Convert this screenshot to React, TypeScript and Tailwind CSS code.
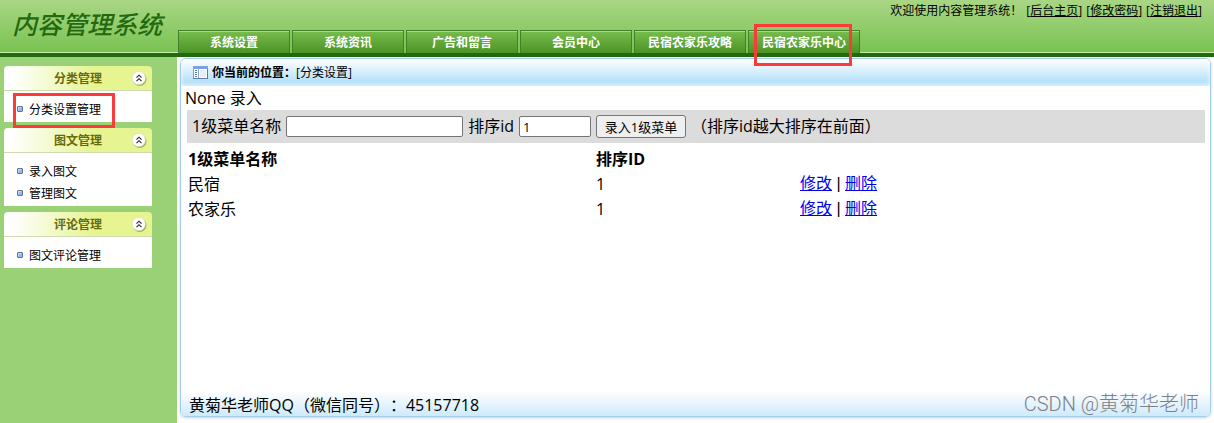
import { useState } from 'react'

const tabs = ['系统设置', '系统资讯', '广告和留言', '会员中心', '民宿农家乐攻略', '民宿农家乐中心']

const menus = [
  { title: '分类管理', items: ['分类设置管理'] },
  { title: '图文管理', items: ['录入图文', '管理图文'] },
  { title: '评论管理', items: ['图文评论管理'] },
]

const rows = [
  { name: '民宿', order: 1 },
  { name: '农家乐', order: 1 },
]

const userLinks = ['后台主页', '修改密码', '注销退出']

function CollapseIcon() {
  return (
    <svg width="18" height="18" viewBox="0 0 18 18" fill="none">
      <circle cx="9.7" cy="10.2" r="6.8" fill="#8a9440" fillOpacity="0.7" />
      <circle cx="8.8" cy="9" r="6.6" fill="#fff" stroke="#d9dcb8" strokeWidth="0.6" />
      <path d="M6.5 8.7 9 6.2l2.5 2.5M6.5 12.2 9 9.7l2.5 2.5" stroke="#222" strokeWidth="1.1" />
    </svg>
  )
}

function WindowIcon() {
  return (
    <svg width="15" height="13" viewBox="0 0 15 13" fill="none">
      <rect x="0.5" y="0.5" width="14" height="12" fill="#fff" stroke="#7d9fd0" />
      <rect x="0" y="0" width="15" height="3" fill="#7ba3df" />
      <path d="M5.5 3v9" stroke="#8aa6d0" />
      <path d="M2 4.5h2M2 6.5h2M2 8.5h2M2 10.5h2" stroke="#5b7db5" />
      <rect x="7" y="4" width="6" height="7" fill="#e9edf5" />
      <path d="M0 12.5h15M14.5 3v9" stroke="#5b79ad" />
    </svg>
  )
}

function BulletIcon() {
  return (
    <svg width="6" height="6" viewBox="0 0 6 6">
      <rect x="0.5" y="0.5" width="5" height="5" rx="0.5" fill="#8fb9f2" stroke="#69748c" />
      <path d="M1 1.5h3M1.5 1v3" stroke="#c3dafa" />
    </svg>
  )
}

function Header() {
  return (
    <header className="relative flex h-[57px] items-end border-b-4 border-[#22690f] bg-linear-to-b from-[#a9d684] to-[#78c250]">
      <div className="flex h-full w-[178px] shrink-0 items-center border-b border-[#c9efaa] pb-1 pl-3">
        <h1 className="text-[25px] leading-8 font-medium whitespace-nowrap text-[#22690f] italic">
          内容管理系统
        </h1>
      </div>
      <nav className="flex gap-0.5">
        {tabs.map((tab, i) => (
          <a
            key={tab}
            href="#"
            className="relative flex h-[23px] w-28 items-center justify-center border-x border-t border-[#43802a] bg-linear-to-b from-[#78bd4e] to-[#4a9424] pt-0.5 text-xs font-bold text-white inset-shadow-[0_1px_0_#a5dc80]"
          >
            {tab}
            {i === 5 && (
              <span className="pointer-events-none absolute -top-[7px] left-[5px] z-10 h-[42px] w-[98px] border-3 border-[#fb3a3a]" />
            )}
          </a>
        ))}
      </nav>
      <div className="h-full flex-1 border-b border-[#c9efaa] pr-3">
        <div className="flex justify-end gap-1 pt-[3px] text-xs leading-4 whitespace-nowrap">
          <span>欢迎使用内容管理系统！</span>
          {userLinks.map(link => (
            <span key={link}>
              [<a href="#" className="underline">{link}</a>]
            </span>
          ))}
        </div>
      </div>
    </header>
  )
}

function Sidebar() {
  const [closed, setClosed] = useState<string[]>([])

  const toggle = (title: string) =>
    setClosed(c => (c.includes(title) ? c.filter(t => t !== title) : [...c, title]))

  return (
    <aside className="flex w-[177px] shrink-0 flex-col gap-1.5 bg-[#9ad177] pt-[9px] pr-[25px] pl-1 text-xs">
      {menus.map(menu => (
        <section key={menu.title}>
          <button
            type="button"
            onClick={() => toggle(menu.title)}
            className="relative flex h-[25px] w-full items-center justify-center rounded-t border-b border-[#d0dab0] bg-linear-to-r from-white from-5% via-[#e6f491] via-60% to-[#e6f491] pt-0.5 font-bold text-[#696a08]"
          >
            {menu.title}
            <span className="absolute top-[3px] right-1">
              <CollapseIcon />
            </span>
          </button>
          {!closed.includes(menu.title) && (
            <ul className="bg-white pt-[7px] pb-0.5">
              {menu.items.map(item => (
                <li key={item} className="relative flex h-[22px] items-center gap-1.5 pl-[13px]">
                  <BulletIcon />
                  <a href="#" className="pt-0.5">{item}</a>
                  {item === '分类设置管理' && (
                    <span className="pointer-events-none absolute -top-[5px] left-[9px] z-10 h-[35px] w-[102px] border-3 border-[#fb3a3a]" />
                  )}
                </li>
              ))}
            </ul>
          )}
        </section>
      ))}
    </aside>
  )
}

function EntryForm() {
  return (
    <form
      onSubmit={e => e.preventDefault()}
      className="mr-[5px] ml-1.5 flex h-[33px] items-center gap-[5px] bg-[#dcdcdc] pl-[5px] whitespace-nowrap"
    >
      <label htmlFor="name" className="pb-0.5">1级菜单名称</label>
      <input
        id="name"
        type="text"
        className="h-[21px] w-[177px] rounded-xs border border-[#767676] bg-white px-0.5 text-[13px]"
      />
      <label htmlFor="order" className="pb-0.5">排序id</label>
      <input
        id="order"
        type="text"
        defaultValue="1"
        className="h-[21px] w-[72px] rounded-xs border border-[#767676] bg-white px-[3px] text-[13px]"
      />
      <button
        type="submit"
        className="h-[23px] w-[90px] rounded-[3px] border border-[#767676] bg-[#efefef] text-[13px] leading-5"
      >
        录入1级菜单
      </button>
      <span className="pb-0.5">（排序id越大排序在前面）</span>
    </form>
  )
}

function CategoryTable() {
  return (
    <div className="mt-[3px] mr-[3px] ml-1.5">
      <table className="w-full table-fixed text-left">
        <thead>
          <tr className="h-[25px]">
            <th className="w-2/5 pl-px font-bold">1级菜单名称</th>
            <th className="w-1/5 pl-px font-bold">排序ID</th>
            <th className="w-2/5" />
          </tr>
        </thead>
        <tbody>
          {rows.map(row => (
            <tr key={row.name} className="h-[25px]">
              <td className="pl-px">{row.name}</td>
              <td className="pl-px">{row.order}</td>
              <td className="pl-px">
                <a href="#" className="text-[#0000ee] underline">修改</a>
                <span className="font-['Liberation_Sans',sans-serif]"> | </span>
                <a href="#" className="text-[#0000ee] underline">删除</a>
              </td>
            </tr>
          ))}
        </tbody>
      </table>
    </div>
  )
}

export default function App() {
  return (
    <div className="relative flex min-h-screen flex-col bg-white font-['Open_Sans','Noto_Sans_CJK_SC',sans-serif] text-base leading-6 text-black [text-spacing-trim:space-all]">
      <Header />
      <div className="flex flex-1">
        <Sidebar />
        <main className="flex min-w-0 flex-1 flex-col pt-px pr-[3px] pb-1.5 pl-[3px]">
          <div className="flex flex-1 flex-col overflow-hidden rounded-md border border-[#a3cfee] shadow-[0_1px_3px_#d0d0d0]">
            <div className="flex h-[27px] items-center bg-linear-to-b from-white to-[#b9e2fa] to-80% pl-3 text-xs inset-shadow-[0_0_4px_#fff]">
              <WindowIcon />
              <strong className="pl-1">你当前的位置：</strong>
              <span>[分类设置]</span>
            </div>
            <p className="pl-1">None 录入</p>
            <EntryForm />
            <div className="flex flex-1 flex-col">
              <CategoryTable />
            </div>
            <footer className="bg-linear-to-b from-white to-[#cdeafc] pt-0.5 pl-2">
              <p className="-mb-px">黄菊华老师QQ（微信同号）：45157718</p>
            </footer>
          </div>
        </main>
      </div>
      <div className="pointer-events-none absolute right-[15px] bottom-[5px] font-[Roboto,'Noto_Sans_CJK_SC',sans-serif] text-xl leading-7 font-light text-[#7d8184]">
        CSDN @黄菊华老师
      </div>
    </div>
  )
}
